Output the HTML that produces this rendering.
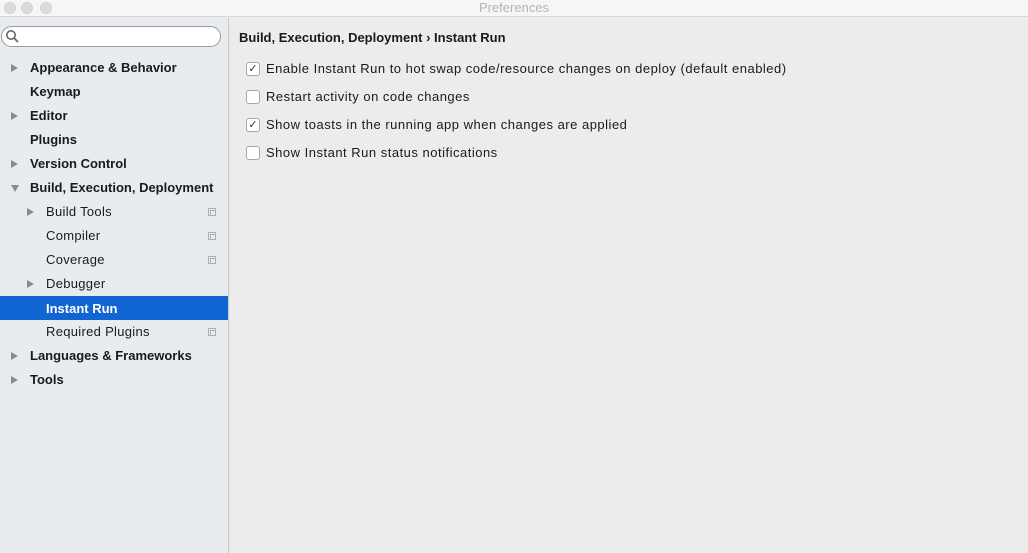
<!DOCTYPE html>
<html><head><style>
*{margin:0;padding:0;box-sizing:border-box}
body{width:1028px;height:553px;overflow:hidden;background:#ececec;font-family:"Liberation Sans",sans-serif;font-size:13px;color:#1a1a1a;position:relative}
#tb{position:absolute;left:0;top:0;width:1028px;height:17px;background:#f6f6f6;border-bottom:1px solid #d6d6d6;text-align:center;color:#b4b4b4;font-size:13px;line-height:16px}
.dot{position:absolute;top:2px;width:12px;height:12px;border-radius:50%;background:#dcdcdc;border:1px solid #d0d0d0}
#side{position:absolute;left:0;top:18px;width:229px;height:535px;background:#e8ebf0;border-right:1px solid #c8c8c8}
#search{position:absolute;left:1px;top:8px;width:220px;height:21px;border:1px solid #9a9a9a;border-radius:11px;background:#fff}
.row{position:absolute;left:0;width:228px;height:24px;line-height:24px;letter-spacing:0.3px}
.row.b{font-weight:bold;letter-spacing:0}
.row span.t{position:absolute}
.arr{position:absolute;top:8px;width:0;height:0;border-left:7px solid #8c8c8c;border-top:4px solid transparent;border-bottom:4px solid transparent}
.arr.d{border-top:7px solid #8c8c8c;border-left:4px solid transparent;border-right:4px solid transparent;border-bottom:0;top:9px}
.ic{position:absolute;left:208px;top:8px;width:8px;height:8px;border:1px solid #a8b0b8}
.ic:after{content:"";position:absolute;left:1px;top:1px;width:5px;height:5px;border-top:1px solid #a8b0b8;border-left:1px solid #a8b0b8}
.sel{background:#1065d3;color:#fff}
#main{position:absolute;left:239px;top:30px}
.cb{position:absolute;left:246px;width:14px;height:14px;border:1px solid #a8a8a8;border-radius:3px;background:#fff;font-size:11px;line-height:12px;text-align:center;color:#333}
.lb{position:absolute;left:266px;letter-spacing:0.5px}
</style></head><body>
<div id="tb"><div class="dot" style="left:4px"></div><div class="dot" style="left:21px"></div><div class="dot" style="left:40px"></div>Preferences</div>
<div id="side">
<div id="search"><svg width="16" height="16" style="position:absolute;left:3px;top:2px"><circle cx="6" cy="6" r="4.2" fill="none" stroke="#666" stroke-width="1.6"/><line x1="9" y1="9" x2="13" y2="13" stroke="#666" stroke-width="1.8"/></svg></div>
</div>
<div class="row b" style="top:56px"><i class="arr" style="left:11px"></i><span class="t" style="left:30px">Appearance &amp; Behavior</span></div>
<div class="row b" style="top:80px"><span class="t" style="left:30px">Keymap</span></div>
<div class="row b" style="top:104px"><i class="arr" style="left:11px"></i><span class="t" style="left:30px">Editor</span></div>
<div class="row b" style="top:128px"><span class="t" style="left:30px">Plugins</span></div>
<div class="row b" style="top:152px"><i class="arr" style="left:11px"></i><span class="t" style="left:30px">Version Control</span></div>
<div class="row b" style="top:176px"><i class="arr d" style="left:11px"></i><span class="t" style="left:30px">Build, Execution, Deployment</span></div>
<div class="row" style="top:200px"><i class="arr" style="left:27px"></i><span class="t" style="left:46px">Build Tools</span><i class="ic"></i></div>
<div class="row" style="top:224px"><span class="t" style="left:46px">Compiler</span><i class="ic"></i></div>
<div class="row" style="top:248px"><span class="t" style="left:46px">Coverage</span><i class="ic"></i></div>
<div class="row" style="top:272px"><i class="arr" style="left:27px"></i><span class="t" style="left:46px">Debugger</span></div>
<div class="row b sel" style="top:296px"><span class="t" style="left:46px;top:1px">Instant Run</span></div>
<div class="row" style="top:320px"><span class="t" style="left:46px">Required Plugins</span><i class="ic"></i></div>
<div class="row b" style="top:344px"><i class="arr" style="left:11px"></i><span class="t" style="left:30px">Languages &amp; Frameworks</span></div>
<div class="row b" style="top:368px"><i class="arr" style="left:11px"></i><span class="t" style="left:30px">Tools</span></div>
<div id="main" style="font-weight:bold">Build, Execution, Deployment › Instant Run</div>
<div class="cb" style="top:62px">✓</div><div class="lb" style="top:61px">Enable Instant Run to hot swap code/resource changes on deploy (default enabled)</div>
<div class="cb" style="top:90px"></div><div class="lb" style="top:89px">Restart activity on code changes</div>
<div class="cb" style="top:118px">✓</div><div class="lb" style="top:117px">Show toasts in the running app when changes are applied</div>
<div class="cb" style="top:146px"></div><div class="lb" style="top:145px">Show Instant Run status notifications</div>
</body></html>
